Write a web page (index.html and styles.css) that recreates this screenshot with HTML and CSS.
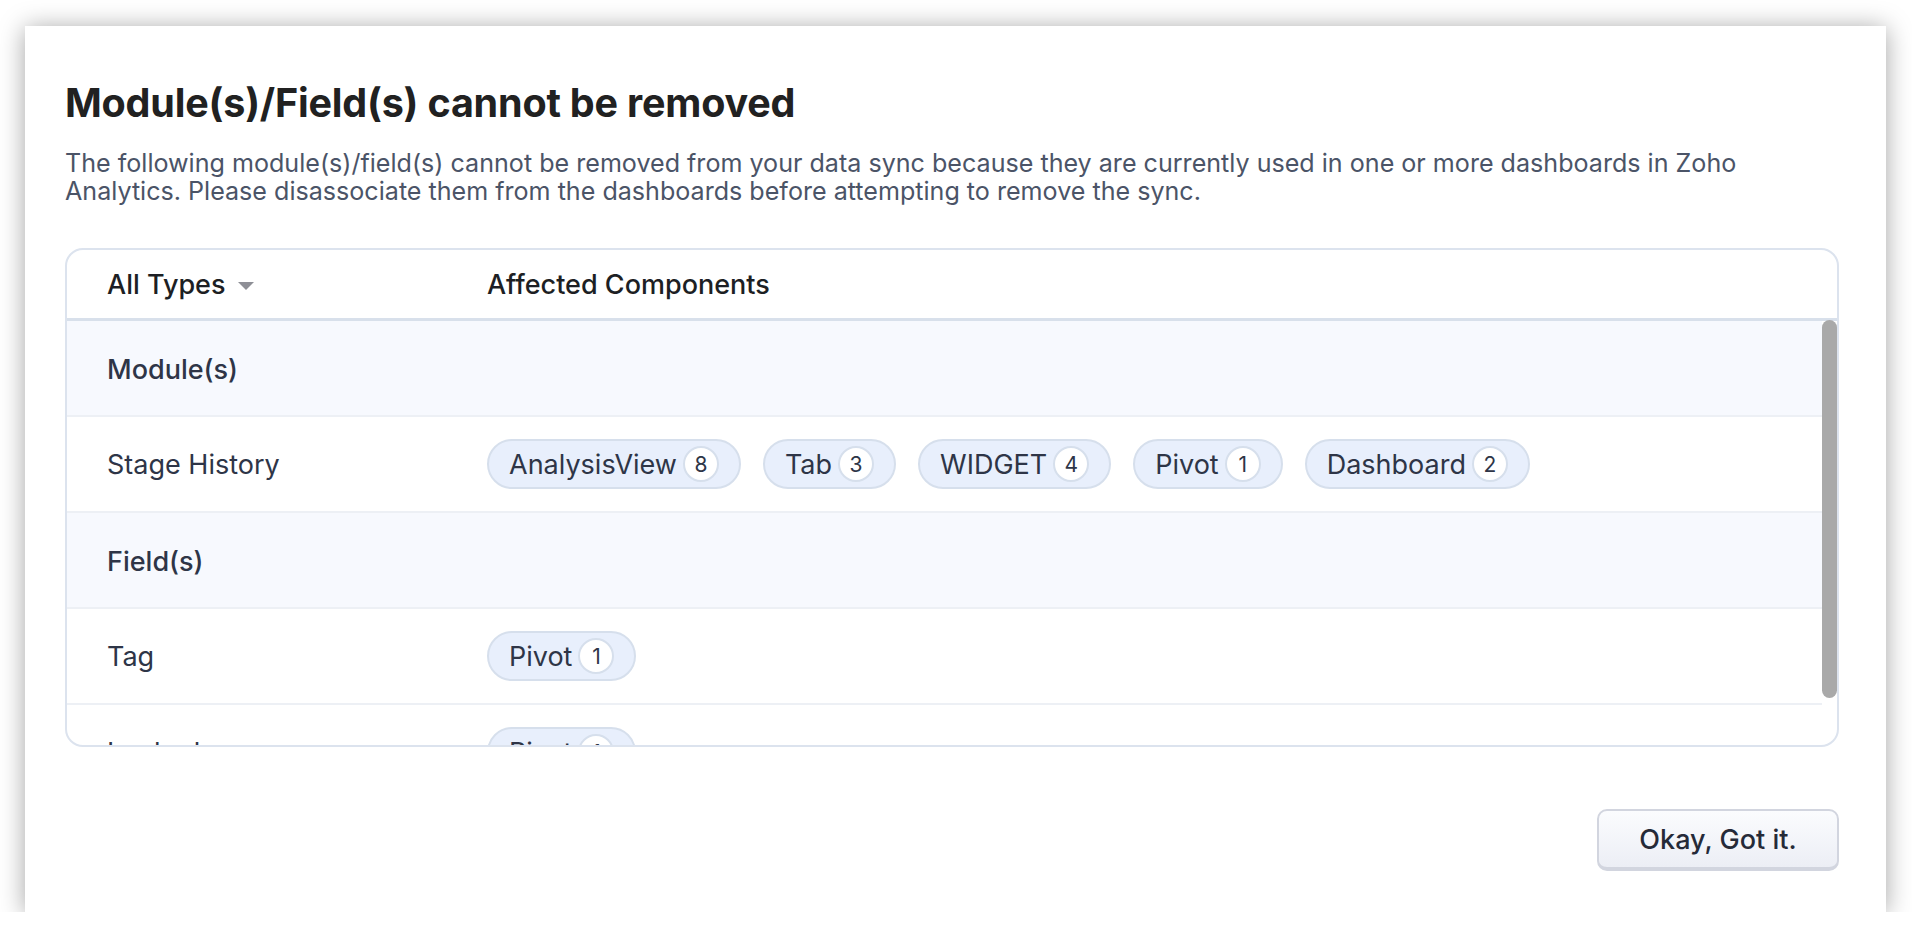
FILE: index.html
```html
<!DOCTYPE html>
<html lang="en">
<head>
<meta charset="utf-8">
<title>Module(s)/Field(s) cannot be removed</title>
<link rel="stylesheet" href="styles.css">
</head>
<body>
<div class="dialog">
  <h1 class="title">Module(s)/Field(s) cannot be removed</h1>
  <p class="desc">The following module(s)/field(s) cannot be removed from your data sync because they are currently used in one or more dashboards in Zoho Analytics. Please disassociate them from the dashboards before attempting to remove the sync.</p>
  <div class="table">
    <div class="thead">
      <div class="col-name">All Types <span class="caret"></span></div>
      <div class="col-comp">Affected Components</div>
    </div>
    <div class="tbody-wrap">
      <div class="tbody">
        <div class="row group"><div class="col-name">Module(s)</div></div>
        <div class="row">
          <div class="col-name">Stage History</div>
          <div class="col-comp pills">
            <span class="pill">AnalysisView<span class="count">8</span></span>
            <span class="pill">Tab<span class="count">3</span></span>
            <span class="pill">WIDGET<span class="count">4</span></span>
            <span class="pill">Pivot<span class="count">1</span></span>
            <span class="pill">Dashboard<span class="count">2</span></span>
          </div>
        </div>
        <div class="row group"><div class="col-name">Field(s)</div></div>
        <div class="row">
          <div class="col-name">Tag</div>
          <div class="col-comp pills">
            <span class="pill">Pivot<span class="count">1</span></span>
          </div>
        </div>
        <div class="row">
          <div class="col-name">Locked</div>
          <div class="col-comp pills">
            <span class="pill">Pivot<span class="count">1</span></span>
          </div>
        </div>
      </div>
      <div class="scroll-thumb"></div>
    </div>
  </div>
  <div class="footer">
    <button class="btn">Okay, Got it.</button>
  </div>
</div>
</body>
</html>
```

FILE: styles.css
```css
html, body {
  margin: 0;
  padding: 0;
  background: #ffffff;
}
body {
  font-family: Inter, Roboto, "Liberation Sans", sans-serif;
  color: #2e3547;
}
.dialog {
  box-sizing: border-box;
  width: 1861px;
  margin: 26px 0 0 25px;
  padding: 53px 47px 41px 40px;
  background: #ffffff;
  box-shadow: 0 2px 24px rgba(0, 0, 0, 0.36);
}
.title {
  margin: 0;
  font-size: 39.5px;
  line-height: 48px;
  font-weight: 700;
  color: #212121;
  letter-spacing: -0.2px;
}
.desc {
  max-width: 1720px;
  margin: 22px 0 0;
  font-size: 25.1px;
  line-height: 28px;
  color: #4b5467;
}
.table {
  margin-top: 43px;
  border: 2px solid #dce3ee;
  border-radius: 18px;
  overflow: hidden;
}
.thead {
  display: flex;
  align-items: center;
  height: 68px;
  border-bottom: 3px solid #d8e0eb;
  font-size: 27px;
  font-weight: 500;
  color: #1d1f24;
}
.col-name {
  box-sizing: border-box;
  width: 420px;
  flex: none;
  padding-left: 40px;
  display: flex;
  align-items: center;
}
.col-comp {
  flex: 1;
}
.caret {
  display: inline-block;
  width: 0;
  height: 0;
  margin-left: 12px;
  margin-top: 3px;
  border-left: 8.5px solid transparent;
  border-right: 8.5px solid transparent;
  border-top: 8px solid #8e8f96;
}
.tbody-wrap {
  position: relative;
}
.tbody {
  height: 424px;
  overflow: hidden;
  padding-right: 15px;
}
.scroll-thumb {
  position: absolute;
  top: -1px;
  right: 0;
  width: 15px;
  height: 378px;
  border-radius: 8px;
  background: #a9a9a9;
}
.row {
  display: flex;
  align-items: center;
  height: 94px;
  border-bottom: 2px solid #edf0f5;
  font-size: 27px;
  color: #2e3547;
}
.row.group {
  background: #f7f9fe;
  font-weight: 500;
  padding-top: 2px;
  box-sizing: border-box;
  height: 96px;
}
.pills {
  display: flex;
  align-items: center;
  gap: 22px;
}
.pill {
  box-sizing: border-box;
  display: inline-flex;
  align-items: center;
  height: 50px;
  padding: 0 20px;
  border: 2px solid #d6dfec;
  border-radius: 25px;
  background: #e8effc;
  font-size: 27px;
  color: #2e3547;
}
.count {
  box-sizing: border-box;
  display: inline-flex;
  align-items: center;
  justify-content: center;
  width: 36px;
  height: 36px;
  margin-left: 6px;
  border: 2px solid #d6dfec;
  border-radius: 50%;
  background: #ffffff;
  font-size: 21px;
}
.footer {
  display: flex;
  justify-content: flex-end;
  margin-top: 62px;
}
.btn {
  box-sizing: border-box;
  width: 242px;
  height: 62px;
  border: 2px solid #d2d5df;
  border-bottom-width: 4px;
  border-radius: 10px;
  background: linear-gradient(#fbfcfe, #eceef5);
  font-family: Inter, Roboto, "Liberation Sans", sans-serif;
  font-size: 27px;
  font-weight: 500;
  color: #252a38;
  padding: 0;
}
```
